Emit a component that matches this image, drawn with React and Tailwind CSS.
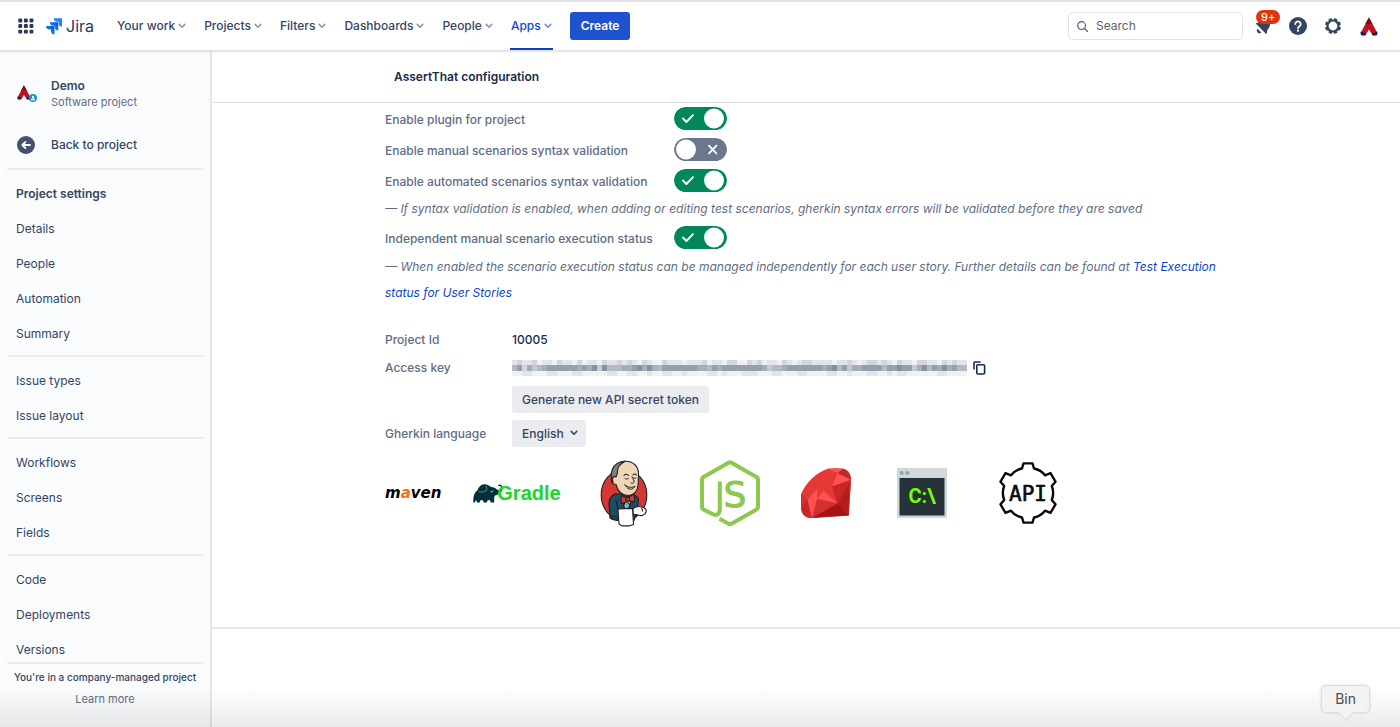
import { useState } from "react";

const navItems = ["Your work", "Projects", "Filters", "Dashboards", "People", "Apps"];

const sideGroups = [
  ["Details", "People", "Automation", "Summary"],
  ["Issue types", "Issue layout"],
  ["Workflows", "Screens", "Fields"],
  ["Code", "Deployments", "Versions"],
];

function Chevron({ className }) {
  return (
    <svg className={className} width="8" height="6" viewBox="0 0 8 6" fill="none" stroke="currentColor" strokeWidth="1.5" strokeLinecap="round" strokeLinejoin="round" aria-hidden="true">
      <path d="M1.2 1.4 4 4.2 6.8 1.4" />
    </svg>
  );
}

function AppGrid() {
  return (
    <svg width="16" height="16" viewBox="0 0 16 16" fill="#253858" aria-hidden="true">
      {[0, 5.6, 11.2].map((y) =>
        [0, 5.6, 11.2].map((x) => <rect key={`${x}-${y}`} x={x + 0.3} y={y + 0.5} width="3.9" height="3.9" rx="1" />)
      )}
    </svg>
  );
}

function JiraMark() {
  return (
    <svg width="16" height="17" viewBox="0 0 16 17" aria-hidden="true">
      <defs>
        <linearGradient id="jiraFold" x1="1" y1="0" x2="0.3" y2="0.8">
          <stop offset="0" stopColor="#0052cc" />
          <stop offset="1" stopColor="#2684ff" />
        </linearGradient>
      </defs>
      <path d="M15.6.3H7.8a3.5 3.5 0 0 0 3.5 3.5h1.4v1.4a3.5 3.5 0 0 0 3.5 3.5V.9a.6.6 0 0 0-.6-.6Z" fill="#2684ff" />
      <path d="M11.7 4.2H3.9a3.5 3.5 0 0 0 3.5 3.5h1.4v1.4a3.5 3.5 0 0 0 3.5 3.5V4.8a.6.6 0 0 0-.6-.6Z" fill="url(#jiraFold)" />
      <path d="M7.9 8.1H.1a3.5 3.5 0 0 0 3.5 3.5H5V13a3.5 3.5 0 0 0 3.5 3.5V8.7a.6.6 0 0 0-.6-.6Z" fill="url(#jiraFold)" />
    </svg>
  );
}

function AssertMark({ className }) {
  return (
    <svg className={className} viewBox="0 0 18 19" aria-hidden="true">
      <path d="M8.9.4 17.4 16l-1 2-3.600.4L9 12.600l-3.800 5.800-3.600-.4-1-2Z" fill="#bd1220" />
      <path d="M8.900.4 12.600 7H5.300Z" fill="#7d0c16" />
      <path d="m.6 14.600 5.600 2-1.200 1.900L.9 18.200Z" fill="#1b1464" />
      <path d="m17.400 14.600-5.600 2 1.200 1.900 4.100-.3Z" fill="#1b1464" />
    </svg>
  );
}

function Bell() {
  return (
    <svg width="20" height="20" viewBox="0 0 20 20" fill="#344563" aria-hidden="true">
      <path d="M2.400 8.300c-.6-.6-.2-1.500.6-1.600 2.100-.2 3-.6 4-1.700 2.200-2 5.600-1.800 7.500.2s2 5.200 0 7.300c-1.200 1.300-1.500 2.600-1.500 4.400 0 .8-.8 1.100-1.400.6Z" />
      <path d="M3.600 12.700 7.300 16.400a2.500 2.500 0 0 1-3.700-3.700Z" />
    </svg>
  );
}

function Help() {
  return (
    <svg width="18" height="18" viewBox="0 0 18 18" aria-hidden="true">
      <circle cx="9" cy="9" r="9" fill="#344563" />
      <path d="M6.3 7.1a2.7 2.7 0 1 1 4.1 2.3c-.9.5-1.4.9-1.4 1.8" fill="none" stroke="#fff" strokeWidth="1.8" strokeLinecap="round" />
      <circle cx="9" cy="13.7" r="1.15" fill="#fff" />
    </svg>
  );
}

function Gear() {
  return (
    <svg width="18" height="18" viewBox="0 0 18 18" aria-hidden="true">
      <circle cx="9" cy="9" r="5.5" fill="none" stroke="#344563" strokeWidth="2.200" />
      {[22.5, 67.5, 112.5, 157.5, 202.5, 247.5, 292.5, 337.5].map((a) => (
        <rect key={a} x="7.2" y="1" width="3.6" height="2.8" rx="0.9" fill="#344563" transform={`rotate(${a} 9 9)`} />
      ))}
    </svg>
  );
}

function Header() {
  return (
    <header className="relative z-10 flex h-[51px] shrink-0 items-center border-t-2 border-t-[#e2e2e2] border-b border-b-[#dfe1e6] bg-white pr-[22px] pl-[18px] shadow-[0_1px_2px_rgba(9,30,66,0.12)]">
      <button type="button" aria-label="Switch to" className="mr-3">
        <AppGrid />
      </button>
      <a href="#home" className="mr-[23px] flex items-center gap-[4px] text-[16px] text-[#253858]">
        <JiraMark />
        Jira
      </a>
      <nav className="flex h-full items-center gap-[18px] font-medium text-[#344563]">
        {navItems.map((item) => (
          <button
            key={item}
            type="button"
            className={
              item === "Apps"
                ? "relative flex h-full items-center gap-[3px] text-[#0c4ad0] after:absolute after:-right-px after:bottom-0 after:-left-px after:h-[2px] after:bg-[#0c3fc4]"
                : "flex h-full items-center gap-[3px]"
            }
          >
            {item}
            <Chevron className={item === "Apps" ? "text-[#5b8def]" : "text-[#8993a4]"} />
          </button>
        ))}
      </nav>
      <button type="button" className="ml-[18px] h-7 rounded-[3px] bg-[#1f52cf] px-[11px] font-semibold text-white">
        Create
      </button>
      <div className="ml-auto flex items-center">
        <label className="flex h-7 w-[175px] items-center gap-2 rounded-[5px] border border-[#dfe1e6] px-2">
          <svg width="11" height="11" viewBox="0 0 11 11" className="shrink-0" fill="none" stroke="#505f79" strokeWidth="1.2" strokeLinecap="round" aria-hidden="true">
            <circle cx="4.6" cy="4.6" r="3.9" />
            <path d="m7.5 7.5 3 3" />
          </svg>
          <input type="text" aria-label="Search" placeholder="Search" className="h-6 w-full min-w-0 bg-transparent pb-[2px] outline-none placeholder:text-[#636363]" />
        </label>
        <button type="button" aria-label="Notifications, 9+ unread" className="relative ml-[11px]">
          <Bell />
          <span className="absolute -top-[6px] left-[2px] rounded-full bg-[#de350b] px-[5px] text-[11px] leading-[14px] font-medium text-white">9+</span>
        </button>
        <button type="button" aria-label="Help" className="ml-[15px]">
          <Help />
        </button>
        <button type="button" aria-label="Settings" className="ml-[17px]">
          <Gear />
        </button>
        <button type="button" aria-label="Your profile" className="ml-[18px]">
          <AssertMark className="h-[19px] w-[18px]" />
        </button>
      </div>
    </header>
  );
}

function Sidebar() {
  return (
    <aside className="flex w-[212px] shrink-0 flex-col border-r-2 border-[#e4e6ea] bg-[#fafbfd] px-[7px] text-[#344563]">
      <div className="min-h-0 flex-1 overflow-y-auto [scrollbar-width:none]">
        <div className="flex items-center gap-[14px] pt-[27px] pl-[9px]">
          <span className="relative block size-[21px] bg-white">
            <AssertMark className="mt-px h-[15px] w-[16px]" />
            <svg className="absolute right-0 bottom-[3px]" width="8" height="8" viewBox="0 0 8 8" aria-hidden="true">
              <circle cx="4" cy="4" r="4" fill="#1c93c8" />
              <circle cx="4" cy="3" r="1.2" fill="#fff" />
              <path d="M1.8 6.3C2 4.9 3 4.6 4 4.6s2 .3 2.2 1.7Z" fill="#fff" />
            </svg>
          </span>
          <div>
            <p className="leading-4 font-semibold">Demo</p>
            <p className="text-[11px] leading-4 text-[#5e6c84]">Software project</p>
          </div>
        </div>
        <a href="#project" className="mt-[26px] flex h-[18px] items-center gap-4 pl-[10px] font-medium">
          <svg width="18" height="18" viewBox="0 0 18 18" aria-hidden="true">
            <circle cx="9" cy="9" r="9" fill="#42526e" />
            <path d="M13 9H5.6M8.4 6 5.3 9l3.1 3" fill="none" stroke="#fff" strokeWidth="1.8" strokeLinecap="round" strokeLinejoin="round" />
          </svg>
          Back to project
        </a>
        <div className="mt-[14px]">
          {sideGroups.map((group, i) => (
            <ul key={group[0]} className="border-t-2 border-[#ebecf0] pt-[6px] pb-1">
              {i === 0 && <li className="flex h-[35px] items-center pl-[9px] font-semibold">Project settings</li>}
              {group.map((name) => (
                <li key={name}>
                  <a href="#settings" className="flex h-[35px] items-center pl-[9px]">
                    {name}
                  </a>
                </li>
              ))}
            </ul>
          ))}
        </div>
      </div>
      <div className="border-t-2 border-[#ebecf0] pt-[2px] pb-[17px] text-center leading-[22px] whitespace-nowrap">
        <p className="text-[10px] font-medium">You&apos;re in a company-managed project</p>
        <a href="#more" className="text-[11px] text-[#5e6c84]">
          Learn more
        </a>
      </div>
    </aside>
  );
}

function ToggleRow({ label, initial }) {
  const [on, setOn] = useState(initial);
  return (
    <label className="flex h-[31px] cursor-pointer items-center font-medium">
      <span className="w-[289px] pt-[2px]">{label}</span>
      <input type="checkbox" role="switch" checked={on} onChange={() => setOn(!on)} className="peer sr-only" />
      <svg width="53" height="23" viewBox="0 0 53 23" className="rounded-full peer-focus-visible:outline-2" aria-hidden="true">
        <rect width="53" height="23" rx="11.5" fill={on ? "#00875a" : "#6b778c"} />
        <circle cx={on ? 40 : 12} cy="11.5" r="10" fill="#fff" />
        {on ? (
          <path d="m9 11.5 3.4 3.5 6.6-6.8" fill="none" stroke="#fff" strokeWidth="1.9" strokeLinecap="round" strokeLinejoin="round" />
        ) : (
          <path d="m35 7.7 7.4 7.6m0-7.6L35 15.3" fill="none" stroke="#fff" strokeWidth="1.9" strokeLinecap="round" />
        )}
      </svg>
    </label>
  );
}

// Shade of every mosaic cell that hides the key, 0 (clear) to 9 (dark), one string per row.
const maskRows = [
  "2322312213221312213223232132113222122231221331132312213212332222122321233232132213322132322",
  "5736456777777676848555667868657777777665767777777764556777777767857466777757787746857686755",
  "1122111221112211111221122112112211211112212111222111221112211112211211122112122111111221111",
];

function MaskedKey() {
  return (
    <svg width="455" height="16" viewBox="0 0 455 16" className="max-w-full" role="img" aria-label="Hidden access key" shapeRendering="crispEdges">
      {maskRows.map((row, y) =>
        row.split("").map((v, x) => (
          <rect key={`${x}-${y}`} x={x * 5} y={[0, 5, 11][y]} width="5" height={[5, 6, 5][y]} fill="#172b4d" fillOpacity={Number(v) * 0.065} />
        ))
      )}
    </svg>
  );
}

function GradleElephant() {
  return (
    <svg width="30" height="20" viewBox="0 0 30 20" aria-hidden="true">
      <path d="M.3 19.4C.2 14 1 9.500 4.400 7.600 5.600 3.500 9 .6 13 1.400c2.300.4 3.600 1.300 5.200 2.600 2.700.2 4.300 1 5.600 2.500 1.700 1 4 .5 4.200-1.700.1-1.400-1.100-2.100-2.100-1.500l-.9-1.100c1.900-1.500 4.700 0 4.700 2.900 0 3.200-2.800 6.400-6.800 7.100-1.400.2-1.700 1.700-1.700 3v4.200h-3.500c0-3.200-3.700-3.200-3.700 0h-3.500c0-3.200-3.700-3.200-3.700 0H3.900c0-2.500-1.800-2.500-1.800 0Z" fill="#02303a" />
      <path d="M5.800 8.600c2 .7 5.500.7 7.100-.7 1.500-1.400 1.100-3.700-.3-5" fill="none" stroke="#9fb4b8" strokeWidth="0.7" />
      <path d="M17.600 8.200c.8.900 2.100.8 2.700-.4" fill="none" stroke="#fff" strokeWidth="0.8" />
    </svg>
  );
}

function Jenkins() {
  return (
    <svg width="48" height="67" viewBox="0 0 48 67" stroke="#231f20" strokeWidth="1.1" strokeLinejoin="round" strokeLinecap="round" aria-hidden="true">
      <ellipse cx="24" cy="35" rx="22.800" ry="25.500" fill="#d33833" />
      <path d="M15 34C11 36 9 39 9 44l1 14c3 2 6 2.500 10 2.500h14l3-8 1.500-13c-1-3-3-4.500-7-5.500Z" fill="#1d4d63" />
      <path d="m22 36 5 14 6-13Z" fill="#fff" />
      <path d="m26 40-2.500 6 3.500 6 3-7Z" fill="#81b0c4" />
      <path d="M12 16C12 7 18 1.500 25 1.200 33 1 38.500 6 38.500 14l-.3 10c-.4 7-4.500 11.500-9.700 11.500-7 0-11-5-12.500-11-3 0-5-2-4.500-4.500.2-1.500.4-2.500.5-4Z" fill="#f0d6b7" />
      <path d="M13 23c-2-4-2.500-9-.7-13.500C14 5 18.500 1.500 25 1.200c-3.500 2-7 4.300-7.300 8.300 0 3-.2 5-1.700 7.500-1.800-1-3.600.3-3.500 2.500Z" fill="#807e7e" />
      <path d="M24 15.500c1.300-1.700 3.500-1.500 4.500 0M33 15c1-1.400 2.500-1.200 3.500 0" fill="none" />
      <path d="M25 18.500c1 .8 2.300.8 3.300.1M33.500 18c.8.500 1.700.5 2.400 0M32 17c.5 2.500 3 3.500 2 5.500-.6 1-2 .9-3 .5M25 25c3.500 3 8 3 10 1-1.500 4-6.500 5-10-1Z" fill="none" strokeWidth="1" />
      <path d="m21.500 35.500 5.500 2.700v3.200l-5.200 2.400c-1-2.600-1-5.500-.3-8.300ZM33.500 34l-5 3.500v3.400l5.800 1.200c.8-2.600.3-5.400-.8-8.100Z" fill="#d33833" />
      <circle cx="27.600" cy="39.400" r="1.900" fill="#d33833" />
      <path d="M33 48.500c3-2.200 6-2.500 9-1.500 3 .8 4.800 2.600 4 5-.8 3-4.500 4.500-8 3l-5-1Z" fill="#fff" />
      <path d="m18 49 14.500-.6 1 16-4.500 1.500h-7L19 64Z" fill="#fff" />
      <path d="m10 56 8 1.500M16 41l2 8M41.500 48.500c1 .6 1.300 1.500.9 2.500" fill="none" />
    </svg>
  );
}

function NodeMark() {
  return (
    <svg width="60" height="67" viewBox="0 0 60 67" fill="none" stroke="#8cc84b" strokeWidth="4" strokeLinejoin="round" aria-hidden="true">
      <path d="M19.800 21.500V49c0 5.500-3.500 7-7.500 5L3.500 49.500Q2 48.500 2 47V19.500Q2 18 3.500 17L28.500 2.700Q30 1.800 31.500 2.700L56.500 17Q58 18 58 19.500V47Q58 48.500 56.500 49.500L31.500 63.800Q30 64.700 28.500 63.800L19.500 58.800" />
      <text x="23.500" y="46.500" fontFamily="'DejaVu Sans', sans-serif" fontSize="36" fill="#8cc84b" stroke="#8cc84b" strokeWidth="1">S</text>
    </svg>
  );
}

function Ruby() {
  return (
    <svg width="50" height="50" viewBox="0 0 50 50" aria-hidden="true">
      <path d="M27 .7C31 0 38 0 42 .7 47 2 50 6 50 12l-2.300 35.500L9 50C3 49.500 0 45 0 39V26C5 14 16 4 27 .7Z" fill="#e53935" />
      <path d="m27 .7 15 0-5.500 4.500Z" fill="#ff5252" />
      <path d="M42 .7C47 2 50 6 50 12l-13.500-6.800Z" fill="#c62828" />
      <path d="M36.500 5.200 50 12l-19 6.500Z" fill="#ff5252" />
      <path d="m31 18.500 19-6.500-2.300 35.500-11.200-12Z" fill="#d32f2f" />
      <path d="m31 18.500 5.500 17L50 12Z" fill="#c62828" />
      <path d="m36.500 35.500 12-21-.8 33Z" fill="#b71c1c" />
      <path d="m22.500 22.500 14 13L16 31Z" fill="#ff5252" />
      <path d="m0 26 6.500 6L0 39Z" fill="#d32f2f" />
      <path d="m22.500 22.500-16 9.500L11 50l5-19Z" fill="#e53935" />
      <path d="m6.500 32 9.500-1-4.500 19L9 50Z" fill="#ff5252" />
      <path d="M6.500 32 11 50C4 50 0 45 0 39Z" fill="#c62828" />
      <path d="m6.500 32 9.500-11 .5 10Z" fill="#ff5252" />
      <path d="m16 31 20.500 4.500L11 50Z" fill="#d32f2f" />
      <path d="m36.500 35.500 11.200 12L11 50Z" fill="#a31515" />
    </svg>
  );
}

function Terminal() {
  return (
    <svg width="50" height="50" viewBox="0 0 50 50" aria-hidden="true">
      <rect width="50" height="50" fill="#cfd8dc" />
      <circle cx="4.800" cy="5" r="2" fill="#90a4ae" />
      <circle cx="10.300" cy="5" r="2" fill="#90a4ae" />
      <rect x="2.500" y="10" width="45" height="37.500" fill="#263238" />
      <text x="25" y="35" textAnchor="middle" fontFamily="Roboto, sans-serif" fontWeight="700" fontSize="20" fill="#76ff03">C:\</text>
    </svg>
  );
}

function ApiGear() {
  return (
    <svg width="58" height="62" viewBox="0 0 58 62" fill="none" stroke="#0a0a0a" strokeWidth="2.400" strokeLinejoin="round" aria-hidden="true">
      <path d="M23 6.500 24.500 1.400h9L35 6.500Q42 8 46 13.300l5.500-2.200 5 8.600-3.700 4.300Q55.500 31 52.800 38l3.700 4.300-5 8.600-5.500-2.200Q42 54 35 55.500L33.500 60.600h-9L23 55.500Q16 54 12 48.700l-5.500 2.200-5-8.600L5.200 38Q2.500 31 5.200 24l-3.700-4.300 5-8.600 5.500 2.200Q16 8 23 6.500Z" />
      <text x="29" y="39" textAnchor="middle" fontFamily="'DejaVu Sans Mono', monospace" fontSize="21" fontWeight="400" fill="#0a0a0a" stroke="#0a0a0a" strokeWidth="0.600">API</text>
    </svg>
  );
}

function Integrations() {
  return (
    <div className="mt-3 flex h-[68px] items-center gap-6">
      <a href="#maven" className="w-[60px] font-['DejaVu_Sans',sans-serif] text-[15px] font-bold text-black italic">
        m<span className="text-[#f36f21]">a</span>ven
      </a>
      <a href="#gradle" className="flex w-24 items-center justify-center font-['Liberation_Sans',sans-serif] text-[20px] font-bold text-[#1bd62a]">
        <GradleElephant />
        <span className="-ml-[6px]">Gradle</span>
      </a>
      <a href="#jenkins" aria-label="Jenkins" className="flex w-[70px] justify-center"><Jenkins /></a>
      <a href="#node" aria-label="Node.js" className="flex w-[94px] justify-center"><NodeMark /></a>
      <a href="#ruby" aria-label="Ruby" className="flex w-[50px] justify-center"><Ruby /></a>
      <a href="#cli" aria-label="Command line" className="flex w-[94px] justify-center"><Terminal /></a>
      <a href="#api" aria-label="API" className="flex w-[70px] justify-center"><ApiGear /></a>
    </div>
  );
}

function Configuration() {
  return (
    <main className="min-w-0 flex-1 bg-white">
      <div className="border-b border-[#dcdee3]">
        <h1 className="mx-auto flex h-[51px] max-w-[842px] items-center px-[9px] font-semibold text-[#172b4d]">AssertThat configuration</h1>
      </div>
      <div className="border-b-2 border-[#e4e6ea] pb-[100px]">
        <div className="mx-auto max-w-[842px] text-[#5e6c84]">
          <ToggleRow label="Enable plugin for project" initial={true} />
          <ToggleRow label="Enable manual scenarios syntax validation" initial={false} />
          <ToggleRow label="Enable automated scenarios syntax validation" initial={true} />
          <p className="leading-[26px] italic">— If syntax validation is enabled, when adding or editing test scenarios, gherkin syntax errors will be validated before they are saved</p>
          <ToggleRow label="Independent manual scenario execution status" initial={true} />
          <p className="pt-px leading-[26px] italic">
            — When enabled the scenario execution status can be managed independently for each user story. Further details can be found at{" "}
            <a href="#docs" className="text-[#0c44cc]">
              Test Execution status for User Stories
            </a>
          </p>
          <div className="mt-5 grid grid-cols-[127px_1fr] items-center font-medium">
            <span className="h-7 leading-7">Project Id</span>
            <span className="text-[#172b4d]">10005</span>
            <span className="h-7 leading-7">Access key</span>
            <div className="flex items-center gap-[6px]">
              <MaskedKey />
              <button type="button" aria-label="Copy access key">
                <svg width="13" height="14" viewBox="0 0 13 14" fill="none" stroke="#172b4d" strokeWidth="1.600" strokeLinejoin="round" aria-hidden="true">
                  <rect x="3.800" y="3.800" width="7.800" height="9.200" rx="1" />
                  <path d="M1 8.500V2a1 1 0 0 1 1-1h5.500" />
                </svg>
              </button>
            </div>
            <button type="button" className="col-start-2 mt-1 h-[27px] justify-self-start rounded-[3px] bg-[#ebecf0] px-[10px] text-[#344563]">
              Generate new API secret token
            </button>
            <label htmlFor="language" className="mt-[7px]">
              Gherkin language
            </label>
            <div className="relative mt-[7px] justify-self-start text-[#344563]">
              <select id="language" className="block h-[27px] w-[74px] appearance-none rounded-[3px] bg-[#ebecf0] pr-5 pl-[10px]">
                <option>English</option>
              </select>
              <Chevron className="pointer-events-none absolute top-[10px] right-[8px]" />
            </div>
          </div>
          <Integrations />
        </div>
      </div>
    </main>
  );
}

export default function App() {
  return (
    <div className="relative flex h-screen flex-col overflow-hidden bg-white font-['Inter',sans-serif] text-[12px]">
      <Header />
      <div className="flex min-h-0 flex-1">
        <Sidebar />
        <Configuration />
      </div>
      <div className="pointer-events-none absolute inset-x-0 bottom-0 h-10 bg-linear-to-t from-black/8 to-transparent" />
      <div className="absolute right-[30px] bottom-[14px] rounded-[5px] border border-[#dcdcdc] bg-[#f3f3f3] px-[13px] text-[14px] leading-[26px] text-[#4c4c4c] shadow-[0_0_3px_rgba(0,0,0,0.12)]">
        Bin
        <svg className="absolute top-full left-1/2 -translate-x-1/2" width="16" height="9" viewBox="0 0 16 9" aria-hidden="true">
          <path d="M0 0 8 8.400 16 0" fill="#f3f3f3" stroke="#d6d6d6" />
          <path d="M0 0h16" stroke="#f3f3f3" strokeWidth="1" />
        </svg>
      </div>
    </div>
  );
}
